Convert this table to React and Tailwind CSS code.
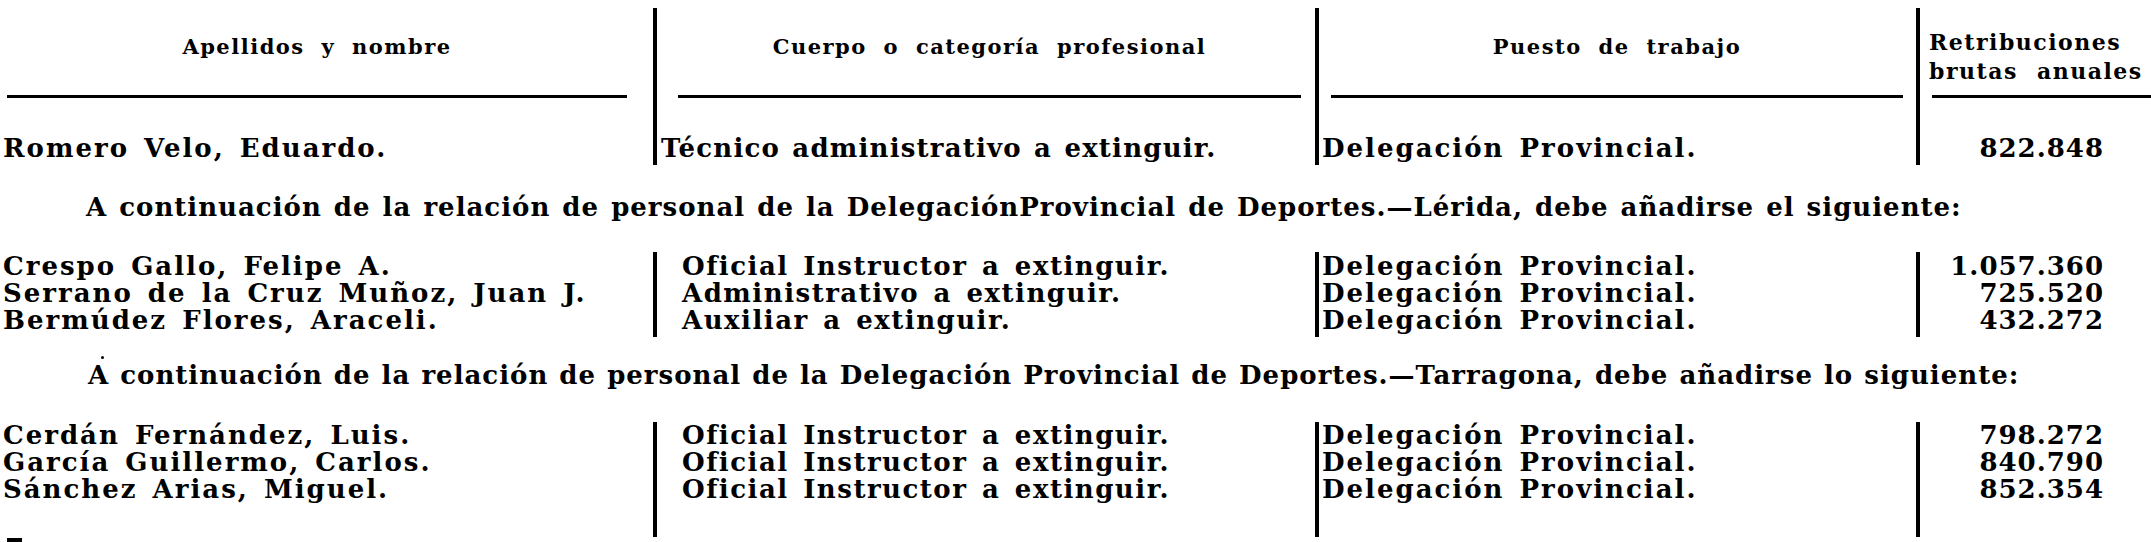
import React from "react";

const FONT = { fontFamily: '"DejaVu Serif", "Liberation Serif", serif' };

function Bar() {
  return <div className="w-[4px] shrink-0 self-stretch bg-black" />;
}

function Col({ rows, idx, className }) {
  return (
    <div className={className}>
      {rows.map((r, i) => (
        <div key={i} className="h-[27px] leading-[27px] whitespace-nowrap">{r[idx]}</div>
      ))}
    </div>
  );
}

function Section({ rows, mt, pad }) {
  return (
    <div className={"flex " + mt}>
      <Col rows={rows} idx={0} className={"w-[653px] shrink-0 pl-[3px] " + pad} />
      <Bar />
      <Col rows={rows} idx={1} className={"w-[658px] shrink-0 pl-[25px] tracking-[1.5px] " + pad} />
      <Bar />
      <Col rows={rows} idx={2} className={"w-[597px] shrink-0 pl-[3px] " + pad} />
      <Bar />
      <Col rows={rows} idx={3} className={"w-[231px] shrink-0 pr-[47px] text-right tracking-[1px] " + pad} />
    </div>
  );
}

export default function App() {
  const s1 = [
    ["Crespo Gallo, Felipe A.", "Oficial Instructor a extinguir.", "Delegación Provincial.", "1.057.360"],
    ["Serrano de la Cruz Muñoz, Juan J.", "Administrativo a extinguir.", "Delegación Provincial.", "725.520"],
    ["Bermúdez Flores, Araceli.", "Auxiliar a extinguir.", "Delegación Provincial.", "432.272"],
  ];
  const s2 = [
    ["Cerdán Fernández, Luis.", "Oficial Instructor a extinguir.", "Delegación Provincial.", "798.272"],
    ["García Guillermo, Carlos.", "Oficial Instructor a extinguir.", "Delegación Provincial.", "840.790"],
    ["Sánchez Arias, Miguel.", "Oficial Instructor a extinguir.", "Delegación Provincial.", "852.354"],
  ];
  const head = "text-[21px] font-bold tracking-[1.5px] [word-spacing:8px] leading-[27px]";
  return (
    <div
      className="relative w-[2151px] h-[542px] overflow-hidden bg-white text-black text-[26px] font-bold tracking-[2px] [word-spacing:4px]"
      style={FONT}
    >
      {/* Header block */}
      <div className="flex pt-[8px]">
        <div className="w-[653px] shrink-0 flex flex-col">
          <div className={"h-[87px] pt-[25px] text-center pl-[7px] pr-[26px] " + head}>
            Apellidos y nombre
          </div>
          <div className="h-[3px] ml-[7px] mr-[26px] bg-black" />
          <div className="h-[67px] pt-[37px] pl-[3px] leading-[27px] whitespace-nowrap">Romero Velo, Eduardo.</div>
        </div>
        <Bar />
        <div className="w-[658px] shrink-0 flex flex-col">
          <div className={"h-[87px] pt-[25px] text-center pl-[21px] pr-[14px] " + head}>
            Cuerpo o categoría profesional
          </div>
          <div className="h-[3px] ml-[21px] mr-[14px] bg-black" />
          <div className="h-[67px] pt-[37px] pl-[4px] leading-[27px] whitespace-nowrap tracking-[1.2px] [word-spacing:2px]">
            Técnico administrativo a extinguir.
          </div>
        </div>
        <Bar />
        <div className="w-[597px] shrink-0 flex flex-col">
          <div className={"h-[87px] pt-[25px] text-center pl-[12px] pr-[13px] " + head}>
            Puesto de trabajo
          </div>
          <div className="h-[3px] ml-[12px] mr-[13px] bg-black" />
          <div className="h-[67px] pt-[37px] pl-[3px] leading-[27px] whitespace-nowrap">Delegación Provincial.</div>
        </div>
        <Bar />
        <div className="w-[231px] shrink-0 flex flex-col">
          <div className="h-[87px] pt-[20px] pl-[9px] text-[22px] font-bold tracking-[1.5px] [word-spacing:10px] leading-[29px] whitespace-nowrap">
            <div>Retribuciones</div>
            <div>brutas anuales</div>
          </div>
          <div className="h-[3px] ml-[12px] bg-black" />
          <div className="h-[67px] pt-[37px] pr-[47px] text-right leading-[27px] tracking-[1px]">822.848</div>
        </div>
      </div>

      {/* Paragraph 1 */}
      <div className="mt-[27px] h-[30px] leading-[30px] pl-[86px] whitespace-nowrap tracking-[1px] [word-spacing:2px]">
        A continuación de la relación de personal de la DelegaciónProvincial de Deportes.—Lérida, debe añadirse el siguiente:
      </div>

      <Section rows={s1} mt="mt-[30px]" pad="pt-[1px] pb-[3px]" />

      {/* Paragraph 2 */}
      <div className="mt-[23px] h-[30px] leading-[30px] pl-[88px] whitespace-nowrap tracking-[1px] [word-spacing:1px]">
        A continuación de la relación de personal de la Delegación Provincial de Deportes.—Tarragona, debe añadirse lo siguiente:
      </div>

      <Section rows={s2} mt="mt-[32px]" pad="pb-[34px]" />

      <div className="absolute left-[101px] top-[356px] w-[3px] h-[3px] rounded-full bg-black" />
      <div className="absolute left-[7px] top-[538px] w-[15px] h-[4px] bg-black" />
    </div>
  );
}
